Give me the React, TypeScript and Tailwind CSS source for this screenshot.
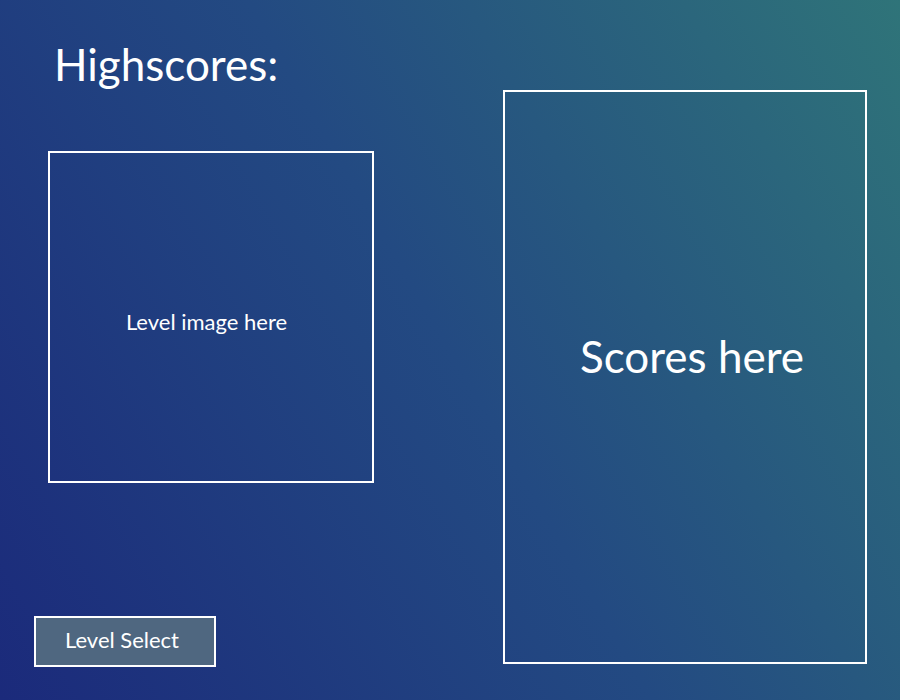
import React from "react";

export default function App() {
  return (
    <div
      className="flex h-[700px] w-[900px] bg-[linear-gradient(60deg,#1b2a7b_0%,#234a82_50%,#2f7479_100%)] text-white"
      style={{ fontFamily: "Lato, 'Open Sans', sans-serif" }}
    >
      <div className="flex w-[503px] flex-col">
        <h1 className="ml-[54px] mt-[42px] text-[44px] leading-none font-normal">Highscores:</h1>
        <div className="ml-[48px] mt-[65px] flex h-[332px] w-[326px] items-center justify-center border-2 border-white pt-[10px] pr-[9px]">
          <span className="text-[22px] leading-none">Level image here</span>
        </div>
        <div className="mb-[33px] ml-[34px] mt-auto flex h-[51px] w-[182px] items-center justify-center border-2 border-white bg-[#4f6780] pr-[6px]">
          <span className="-mt-[3px] text-[22px] leading-none">Level Select</span>
        </div>
      </div>
      <div className="mt-[90px] flex h-[574px] w-[364px] items-center justify-center border-2 border-white pb-[42px] pl-[14px]">
        <span className="text-[44px] leading-none">Scores here</span>
      </div>
    </div>
  );
}
